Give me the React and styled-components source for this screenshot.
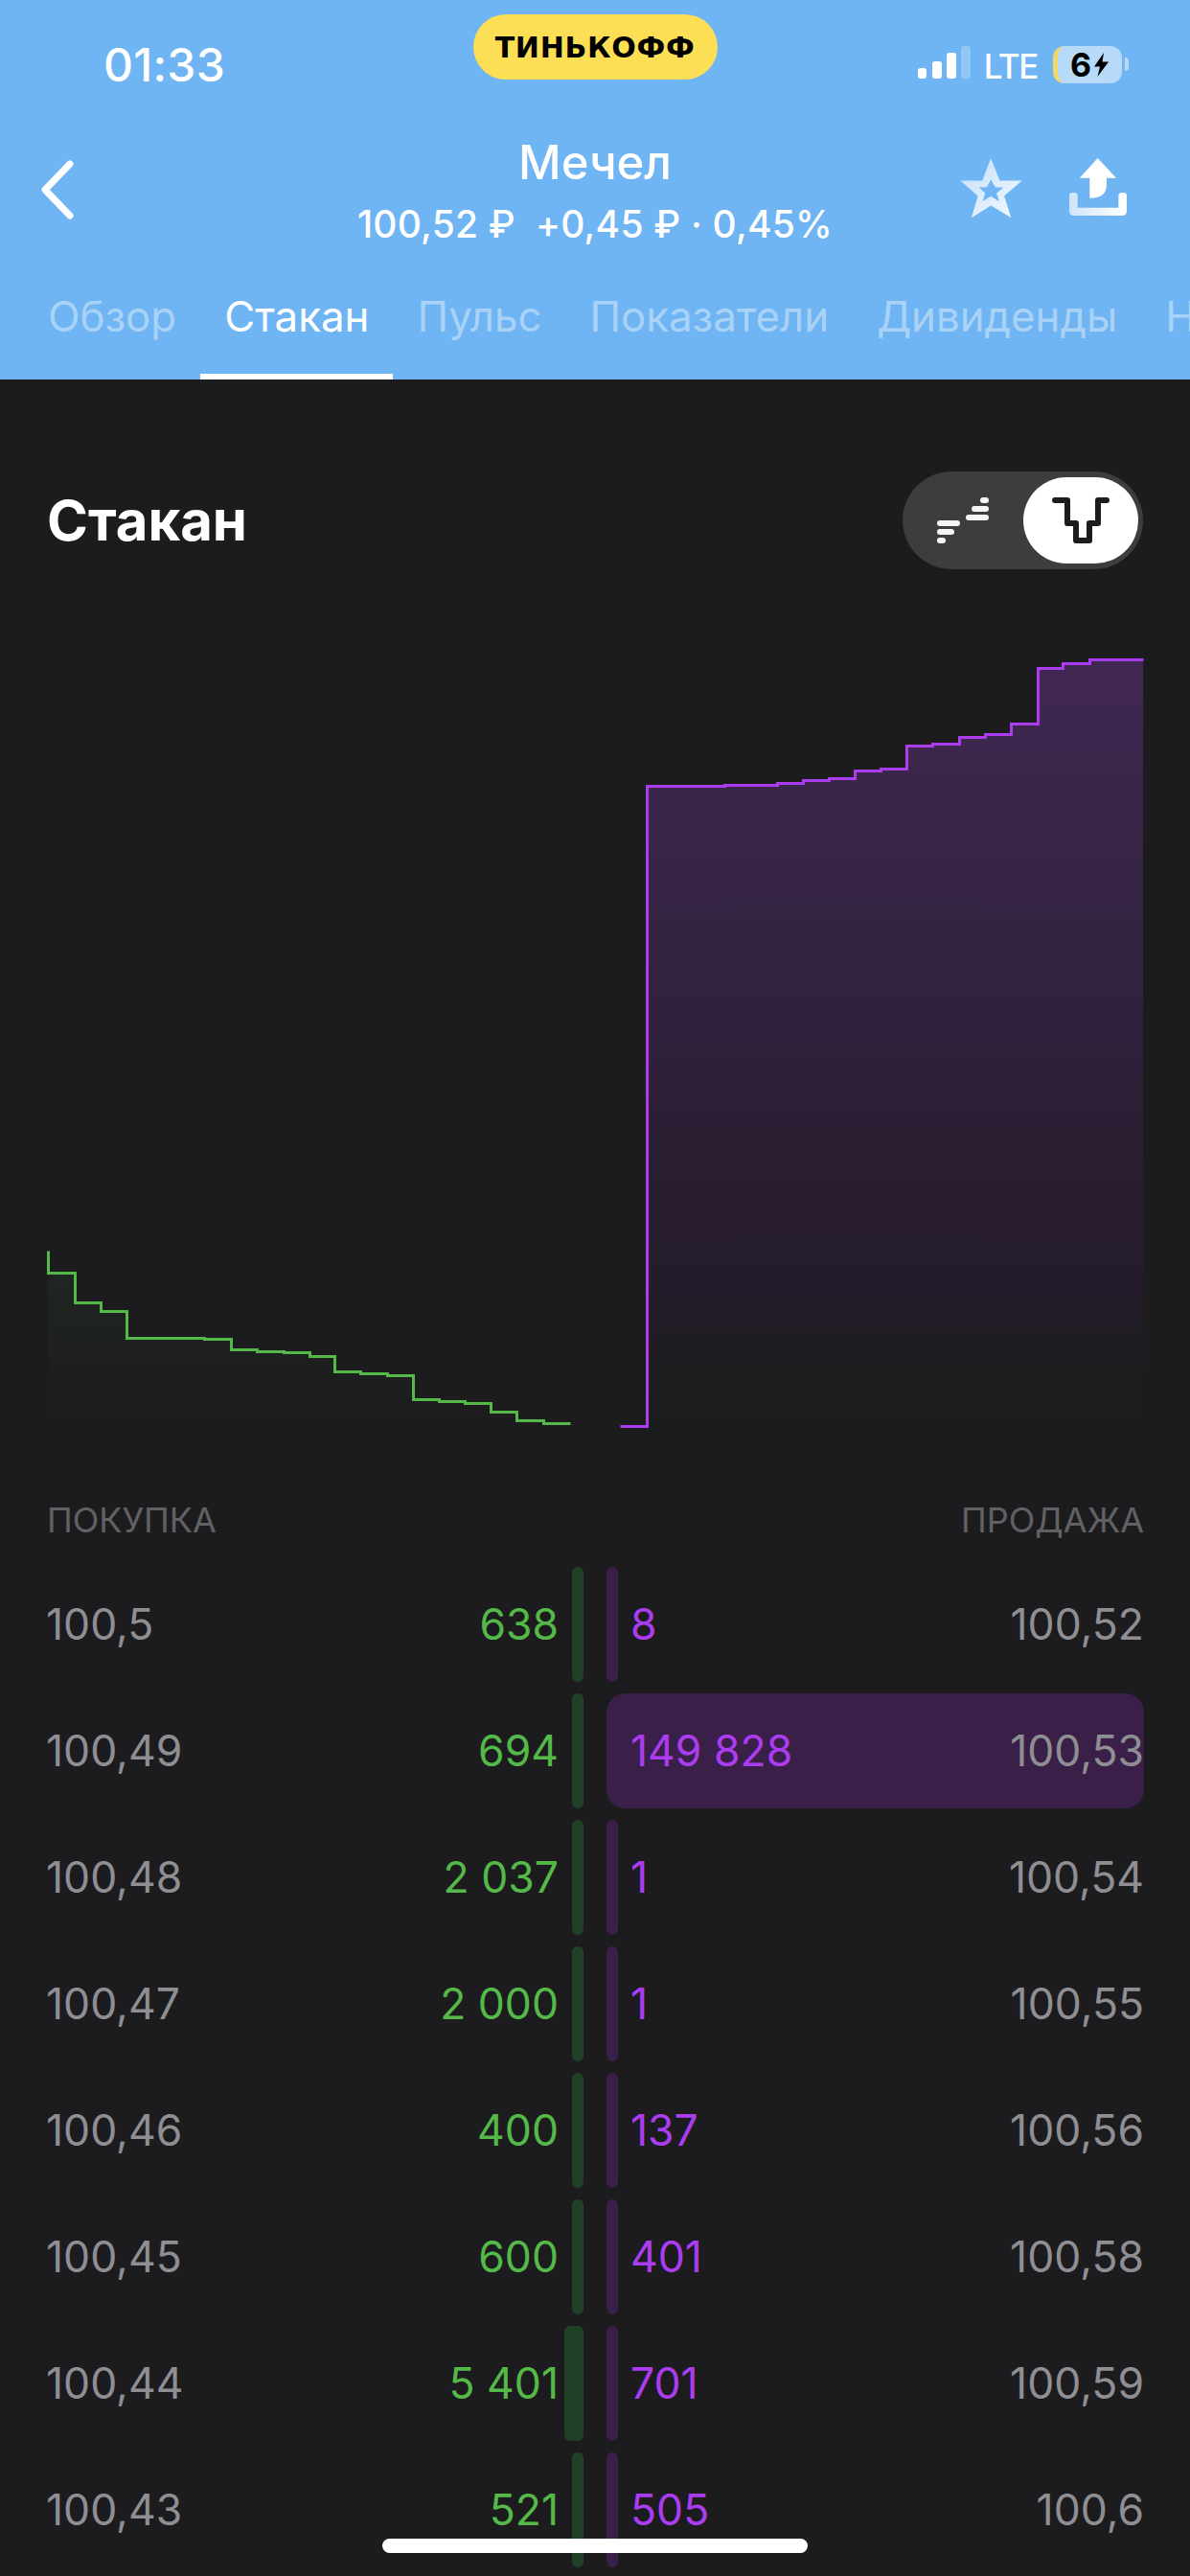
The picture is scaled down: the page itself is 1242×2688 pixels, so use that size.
import React from 'react';
import styled, { createGlobalStyle } from 'styled-components';

const Global = createGlobalStyle`
  html, body {
    margin: 0;
    padding: 0;
    background: #1c1c1e;
  }
  * { box-sizing: border-box; }
`;

const Page = styled.div`
  position: relative;
  width: 1242px;
  height: 2688px;
  overflow: hidden;
  background: #1c1c1e;
  font-family: Inter, "Noto Sans", sans-serif;
`;

const Header = styled.header`
  height: 396px;
  background: #6fb4f3;
  color: #fff;
`;

const StatusBar = styled.div`
  display: grid;
  grid-template-columns: 1fr auto 1fr;
  height: 142px;
  padding: 15px 64px 0;
`;

const Time = styled.div`
  padding-left: 44px;
  font-size: 48px;
  font-weight: 500;
  line-height: 56px;
  letter-spacing: 0.3px;
  margin-top: 25px;
`;

const Brand = styled.div`
  display: flex;
  align-items: center;
  justify-content: center;
  width: 255px;
  height: 68px;
  border-radius: 34px;
  background: #fddf56;
  color: #000;
  font-family: "DejaVu Sans", sans-serif;
  font-size: 30px;
  font-weight: 700;
  letter-spacing: 0.7px;
`;

const StatusIcons = styled.div`
  display: flex;
  justify-content: flex-end;
  align-items: flex-start;
  margin-top: 33px;
`;

const Lte = styled.span`
  margin: 3px 16px 0 14px;
  font-size: 35px;
  font-weight: 500;
  line-height: 36px;
  letter-spacing: -1.4px;
`;

const Battery = styled.div`
  display: flex;
  align-items: center;
  justify-content: center;
  gap: 2px;
  width: 72px;
  height: 39px;
  border-radius: 12px;
  border-left: 5px solid #f3d868;
  background: rgba(255, 255, 255, 0.5);
  color: #000;
  font-size: 34px;
  font-weight: 700;
`;

const BatteryTip = styled.span`
  width: 4px;
  height: 14px;
  margin: 12px 0 0 3px;
  border-radius: 0 4px 4px 0;
  background: rgba(255, 255, 255, 0.5);
`;

const Nav = styled.div`
  display: grid;
  grid-template-columns: 1fr auto 1fr;
  height: 130px;
  padding: 0 66px;
`;

const BackButton = styled.div`
  margin: 25px 0 0 -24px;
`;

const Quote = styled.div`
  text-align: center;
`;

const Title = styled.div`
  font-size: 49px;
  font-weight: 500;
  line-height: 56px;
`;

const Subtitle = styled.div`
  margin-top: 12px;
  font-size: 39px;
  font-weight: 500;
  line-height: 48px;
  letter-spacing: 0.2px;
  white-space: pre;
`;

const Actions = styled.div`
  display: flex;
  justify-content: flex-end;
  gap: 49px;
  margin-top: 23px;
`;

const Tabs = styled.nav`
  display: flex;
  height: 124px;
  padding-left: 25px;
  overflow: hidden;
`;

const Tab = styled.div`
  flex-shrink: 0;
  height: 124px;
  padding: 33px 25px 0;
  border-bottom: 6px solid ${({ $active }) => ($active ? '#fff' : 'transparent')};
  color: ${({ $active }) => ($active ? '#fff' : 'rgba(255, 255, 255, 0.42)')};
  font-size: 43.8px;
  line-height: 52px;
`;

const SectionHead = styled.div`
  display: flex;
  justify-content: space-between;
  align-items: center;
  padding: 96px 49px 0 49px;
`;

const SectionTitle = styled.h2`
  margin: 0;
  color: #fff;
  font-size: 58px;
  font-weight: 700;
  line-height: 102px;
`;

const Toggle = styled.div`
  display: flex;
  align-items: center;
  justify-content: space-between;
  width: 251px;
  height: 102px;
  padding: 0 5px 0 36px;
  border-radius: 51px;
  background: #3d3d3f;
`;

const ToggleKnob = styled.div`
  display: flex;
  align-items: center;
  justify-content: center;
  width: 120px;
  height: 90px;
  border-radius: 45px;
  background: #fff;
`;

const Chart = styled.svg`
  display: block;
  margin-top: 66px;
`;

const Sides = styled.div`
  display: flex;
  justify-content: space-between;
  padding: 66px 48px 29px 49px;
  color: #616164;
  font-size: 36px;
  line-height: 40px;
`;

const Book = styled.div`
  display: flex;
  flex-direction: column;
  gap: 12px;
`;

const Row = styled.div`
  display: flex;
  gap: 24px;
  width: 1194px;
  height: 120px;
  font-size: 44.5px;
`;

const Bid = styled.div`
  position: relative;
  display: flex;
  flex: 0 0 609px;
  align-items: center;
  justify-content: space-between;
  padding: 0 26px 0 48px;
`;

const Ask = styled.div`
  position: relative;
  display: flex;
  flex: 1;
  align-items: center;
  justify-content: space-between;
  padding: 0 0 0 25px;
`;

const Price = styled.span`
  position: relative;
  color: #8e8e93;
`;

const Volume = styled.span`
  position: relative;
  color: ${({ $buy }) => ($buy ? '#54b948' : '#ab3cf0')};
`;

const Depth = styled.div`
  position: absolute;
  top: 0;
  bottom: 0;
  ${({ $buy }) => ($buy ? 'right: 0;' : 'left: 0;')}
  border-radius: ${({ $wide }) => ($wide ? '20px' : '6px')};
  background: ${({ $buy }) => ($buy ? '#1f4227' : '#3a2049')};
`;

const HomeBar = styled.div`
  position: absolute;
  left: 399px;
  top: 2649px;
  width: 444px;
  height: 15px;
  border-radius: 8px;
  background: #fff;
`;

const askLine = [
  [675, 820], [756, 819], [811, 817], [838, 814], [865, 812], [892, 804], [919, 802],
  [946, 778], [973, 776], [1001, 769], [1028, 766], [1055, 755], [1083, 697], [1109, 692], [1137, 688],
];

const bidLine = [
  [50, 1328], [78, 1359], [105, 1368], [132, 1396], [213, 1397], [241, 1408], [268, 1410], [296, 1411],
  [323, 1415], [349, 1431], [376, 1433], [404, 1435], [431, 1460], [458, 1462], [485, 1464],
  [512, 1473], [539, 1482], [567, 1485],
];

const askPath = () => {
  let d = 'M647 1488H675';
  askLine.forEach(([, y], i) => {
    const next = askLine[i + 1] ? askLine[i + 1][0] : 1193;
    d += `V${y}H${next}`;
  });
  return d;
};

const bidPath = () => {
  let d = 'M50 1305';
  bidLine.forEach(([, y], i) => {
    const next = bidLine[i + 1] ? bidLine[i + 1][0] : 595;
    d += `V${y}H${next}`;
  });
  return d;
};

const rows = [
  { bid: '100,5', buy: '638', sell: '8', ask: '100,52' },
  { bid: '100,49', buy: '694', sell: '149 828', ask: '100,53', sellWidth: 561 },
  { bid: '100,48', buy: '2 037', sell: '1', ask: '100,54' },
  { bid: '100,47', buy: '2 000', sell: '1', ask: '100,55' },
  { bid: '100,46', buy: '400', sell: '137', ask: '100,56' },
  { bid: '100,45', buy: '600', sell: '401', ask: '100,58' },
  { bid: '100,44', buy: '5 401', sell: '701', ask: '100,59', buyWidth: 20 },
  { bid: '100,43', buy: '521', sell: '505', ask: '100,6' },
];

const tabs = ['Обзор', 'Стакан', 'Пульс', 'Показатели', 'Дивиденды', 'Новости'];

const SignalIcon = () => (
  <svg width="55" height="34" viewBox="0 0 55 34" fill="#fff">
    <rect x="0" y="23" width="9" height="11" rx="3" />
    <rect x="15" y="16" width="10" height="18" rx="3" />
    <rect x="30" y="7" width="10" height="27" rx="3" />
    <rect x="45" y="0" width="10" height="34" rx="3" opacity="0.25" />
  </svg>
);

const Bolt = () => (
  <svg width="17" height="25" viewBox="0 0 17 25" fill="#000">
    <path d="M11 0 1 14.5h6L4.5 25 16 9.5H9.5z" />
  </svg>
);

const BackIcon = () => (
  <svg width="36" height="62" viewBox="0 0 36 62" fill="none" stroke="#fff" strokeWidth="7" strokeLinecap="round" strokeLinejoin="round">
    <path d="M31 4 5 31l26 27" />
  </svg>
);

const StarIcon = () => (
  <svg width="65" height="63" viewBox="248 436 194 190">
    <defs>
      <linearGradient id="starFill" x1="0" y1="0" x2="1" y2="1">
        <stop offset="0" stopColor="#c3dffa" />
        <stop offset="1" stopColor="#f3f9fe" />
      </linearGradient>
    </defs>
    <path
      fill="url(#starFill)"
      fillRule="evenodd"
      d="M344 436 372 507H442L386 555 408 624 344 585 283 624 303 555 248 507H317ZM344 503 331 528H306L326 546 318 572 344 556 370 572 362 546 384 528H358Z"
    />
  </svg>
);

const ShareIcon = () => (
  <svg width="60" height="60" viewBox="588 435 180 180">
    <defs>
      <linearGradient id="trayFill" x1="0" y1="0" x2="1" y2="0">
        <stop offset="0" stopColor="#cfe5fb" />
        <stop offset="1" stopColor="#fff" />
      </linearGradient>
    </defs>
    <path fill="#fff" d="M677 435 735 497H705V515C705 545 690 560 652 560V497H620Z" />
    <path fill="url(#trayFill)" d="M598 543H604Q614 543 614 553V590H742V553Q742 543 752 543H758Q768 543 768 553V600Q768 615 753 615H603Q588 615 588 600V553Q588 543 598 543Z" />
  </svg>
);

const LadderIcon = () => (
  <svg width="54" height="48" viewBox="978 516 54 48" fill="#f5f5f5">
    <rect x="1023" y="516" width="9" height="6" rx="3" />
    <rect x="1014" y="525" width="18" height="6" rx="3" />
    <rect x="1008" y="534" width="24" height="6" rx="3" />
    <rect x="978" y="540" width="24" height="6" rx="3" />
    <rect x="978" y="549" width="18" height="6" rx="3" />
    <rect x="978" y="558" width="9" height="6" rx="3" />
  </svg>
);

const DepthIcon = () => (
  <svg width="60" height="50" viewBox="1099 518 60 50" fill="none" stroke="#1c1c1e" strokeWidth="6" strokeLinecap="round" strokeLinejoin="round">
    <path d="M1102 522H1115V546H1124V564H1138V546H1147V522H1156" />
  </svg>
);

export default function App() {
  return (
    <Page>
      <Global />
      <Header>
        <StatusBar>
          <Time>01:33</Time>
          <Brand>ТИНЬКОФФ</Brand>
          <StatusIcons>
            <SignalIcon />
            <Lte>LTE</Lte>
            <Battery>6<Bolt /></Battery>
            <BatteryTip />
          </StatusIcons>
        </StatusBar>
        <Nav>
          <BackButton><BackIcon /></BackButton>
          <Quote>
            <Title>Мечел</Title>
            <Subtitle>100,52 ₽  +0,45 ₽ · 0,45%</Subtitle>
          </Quote>
          <Actions>
            <StarIcon />
            <ShareIcon />
          </Actions>
        </Nav>
        <Tabs>
          {tabs.map((tab, i) => <Tab key={tab} $active={i === 1}>{tab}</Tab>)}
        </Tabs>
      </Header>
      <SectionHead>
        <SectionTitle>Стакан</SectionTitle>
        <Toggle>
          <LadderIcon />
          <ToggleKnob><DepthIcon /></ToggleKnob>
        </Toggle>
      </SectionHead>
      <Chart width="1242" height="840" viewBox="0 660 1242 840" fill="none">
        <defs>
          <linearGradient id="askFill" x1="0" y1="688" x2="0" y2="1488" gradientUnits="userSpaceOnUse">
            <stop offset="0" stopColor="#412852" />
            <stop offset="0.39" stopColor="#322341" />
            <stop offset="0.64" stopColor="#2a1e32" />
            <stop offset="0.83" stopColor="#241c2a" />
            <stop offset="0.92" stopColor="#1d1c1f" />
            <stop offset="1" stopColor="#1c1c1e" />
          </linearGradient>
          <linearGradient id="bidFill" x1="0" y1="1305" x2="0" y2="1480" gradientUnits="userSpaceOnUse">
            <stop offset="0" stopColor="#54b948" stopOpacity="0.07" />
            <stop offset="1" stopColor="#54b948" stopOpacity="0" />
          </linearGradient>
        </defs>
        <path d={`${askPath()}V1488H675Z`} fill="url(#askFill)" />
        <path d={`${bidPath()}V1480H50Z`} fill="url(#bidFill)" />
        <g transform="translate(0.5 0.5)">
          <path d={askPath()} stroke="#ab3cf0" strokeWidth="3" />
          <path d={bidPath()} stroke="#54b948" strokeWidth="3" />
        </g>
      </Chart>
      <Sides>
        <span>ПОКУПКА</span>
        <span>ПРОДАЖА</span>
      </Sides>
      <Book>
        {rows.map(row => (
          <Row key={row.bid}>
            <Bid>
              <Price>{row.bid}</Price>
              <Volume $buy>{row.buy}</Volume>
              <Depth $buy style={{ width: row.buyWidth || 12 }} />
            </Bid>
            <Ask>
              <Depth $wide={!!row.sellWidth} style={{ width: row.sellWidth || 12 }} />
              <Volume>{row.sell}</Volume>
              <Price>{row.ask}</Price>
            </Ask>
          </Row>
        ))}
      </Book>
      <HomeBar />
    </Page>
  );
}
